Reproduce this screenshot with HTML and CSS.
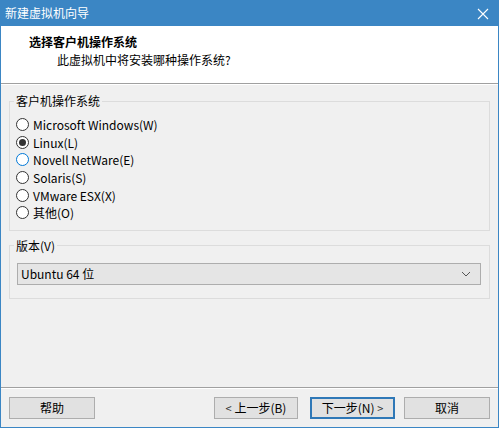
FILE: index.html
```html
<!DOCTYPE html>
<html lang="zh-CN">
<head>
<meta charset="utf-8">
<title>新建虚拟机向导</title>
<link rel="stylesheet" href="styles.css">
</head>
<body>
<div class="window">
  <div class="titlebar">
    <span class="title">新建虚拟机向导</span>
    <span class="close" aria-label="关闭">
      <svg width="12" height="12" viewBox="0 0 12 12"><path d="M1 1 L11 11 M11 1 L1 11" stroke="#fff" stroke-width="1.1" fill="none"/></svg>
    </span>
  </div>
  <div class="client">
    <div class="header">
      <div class="heading">选择客户机操作系统</div>
      <div class="subheading">此虚拟机中将安装哪种操作系统?</div>
    </div>
    <div class="content">
      <fieldset class="group os-group">
        <legend>客户机操作系统</legend>
        <div class="radios">
          <label class="radio"><span class="dot"></span>Microsoft Windows(W)</label>
          <label class="radio checked"><span class="dot"></span>Linux(L)</label>
          <label class="radio hover"><span class="dot"></span>Novell NetWare(E)</label>
          <label class="radio"><span class="dot"></span>Solaris(S)</label>
          <label class="radio"><span class="dot"></span>VMware ESX(X)</label>
          <label class="radio"><span class="dot"></span>其他(O)</label>
        </div>
      </fieldset>
      <fieldset class="group version-group">
        <legend>版本(V)</legend>
        <div class="combo">
          <span class="combo-text">Ubuntu 64 位</span>
          <svg class="chevron" width="10" height="6" viewBox="0 0 10 6"><path d="M1 1 L5 5 L9 1" stroke="#555" stroke-width="1" fill="none"/></svg>
        </div>
      </fieldset>
    </div>
    <div class="footer">
      <button class="btn">帮助</button>
      <div class="nav">
        <button class="btn prev"><span class="lt">&lt;</span> 上一步(B)</button>
        <button class="btn next default">下一步(N) <span class="lt">&gt;</span></button>
        <button class="btn cancel">取消</button>
      </div>
    </div>
  </div>
</div>
</body>
</html>
```

FILE: styles.css
```css
* { box-sizing: border-box; }

html, body {
  margin: 0;
  padding: 0;
  width: 499px;
  height: 428px;
  overflow: hidden;
}

body {
  font-family: "Noto Sans CJK SC", "Noto Sans", sans-serif;
  font-size: 12px;
  color: #000;
}

.window {
  width: 499px;
  height: 428px;
  background: #3b86c4;
  display: flex;
  flex-direction: column;
}

.titlebar {
  height: 26px;
  display: flex;
  align-items: center;
  justify-content: space-between;
  padding: 0 10px 0 5px;
  color: #fff;
}

.title {
  font-size: 12px;
  line-height: 16px;
  margin-top: -1px;
}

.close {
  display: flex;
  width: 12px;
  height: 12px;
  margin-top: 1px;
}

.client {
  flex: 1;
  margin: 0 1px 1px;
  background: #f0f0f0;
  display: flex;
  flex-direction: column;
}

.header {
  height: 58px;
  background: #fff;
  border-bottom: 1px solid #a0a0a0;
  box-shadow: 0 1px 0 #fff;
  padding-top: 8px;
}

.heading {
  font-weight: bold;
  line-height: 16px;
  padding-left: 28px;
}

.subheading {
  line-height: 16px;
  margin-top: 2px;
  padding-left: 56px;
}

.content {
  flex: 1;
  padding: 9px 8px 0;
}

.group {
  margin: 0;
  border: 1px solid #dcdcdc;
  padding: 0 8px 0 4px;
  min-width: 0;
}

.group legend {
  padding: 0 2px;
  line-height: 16px;
  color: #000;
}

.radios {
  margin: 7px 0 8px 2px;
}

.radio {
  display: flex;
  align-items: center;
  height: 17.6px;
  white-space: nowrap;
}

.dot {
  width: 13px;
  height: 13px;
  border: 1px solid #333;
  border-radius: 50%;
  background: #fff;
  margin-right: 4px;
  display: flex;
  align-items: center;
  justify-content: center;
  flex: none;
}

.radio.checked .dot::after {
  content: "";
  width: 7px;
  height: 7px;
  border-radius: 50%;
  background: #333;
}

.radio.hover .dot {
  border-color: #0078d7;
}

.version-group {
  margin-top: 7px;
  padding-left: 7px;
  padding-bottom: 13px;
}

.version-group legend {
  margin-left: -3px;
}

.combo {
  margin-top: 9px;
  height: 22px;
  background: #e5e5e5;
  border: 1px solid #adadad;
  display: flex;
  align-items: center;
  justify-content: space-between;
  padding: 0 9px 0 3px;
}

.combo-text {
  line-height: 16px;
}

.footer {
  border-top: 1px solid #a0a0a0;
  display: flex;
  justify-content: space-between;
  padding: 9px 8px 8px 8px;
  box-shadow: inset 0 1px 0 #fff;
}

.nav {
  display: flex;
}

.btn {
  font-family: inherit;
  font-size: 12px;
  color: #000;
  width: 86px;
  height: 22px;
  background: #e1e1e1;
  border: 1px solid #adadad;
  padding: 0;
  margin: 0;
  line-height: 18px;
}

.btn .lt {
  font-size: 11px;
  color: #333;
}

.prev { width: 84px; }

.next {
  width: 85px;
  margin-left: 12px;
}

.default {
  border: 2px solid #2f78b7;
}

.cancel {
  width: 86px;
  margin-left: 9px;
}
```
